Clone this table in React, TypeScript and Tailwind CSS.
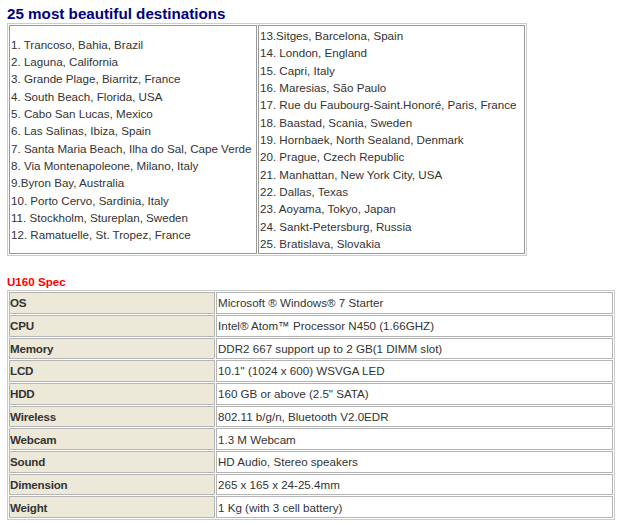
const left = [
  "1. Trancoso, Bahia, Brazil",
  "2. Laguna, California",
  "3. Grande Plage, Biarritz, France",
  "4. South Beach, Florida, USA",
  "5. Cabo San Lucas, Mexico",
  "6. Las Salinas, Ibiza, Spain",
  "7. Santa Maria Beach, Ilha do Sal, Cape Verde",
  "8. Via Montenapoleone, Milano, Italy",
  "9.Byron Bay, Australia",
  "10. Porto Cervo, Sardinia, Italy",
  "11. Stockholm, Stureplan, Sweden",
  "12. Ramatuelle, St. Tropez, France",
];

const right = [
  "13.Sitges, Barcelona, Spain",
  "14. London, England",
  "15. Capri, Italy",
  "16. Maresias, São Paulo",
  "17. Rue du Faubourg-Saint.Honoré, Paris, France",
  "18. Baastad, Scania, Sweden",
  "19. Hornbaek, North Sealand, Denmark",
  "20. Prague, Czech Republic",
  "21. Manhattan, New York City, USA",
  "22. Dallas, Texas",
  "23. Aoyama, Tokyo, Japan",
  "24. Sankt-Petersburg, Russia",
  "25. Bratislava, Slovakia",
];

const specs: [string, string][] = [
  ["OS", "Microsoft ® Windows® 7 Starter"],
  ["CPU", "Intel® Atom™ Processor N450 (1.66GHZ)"],
  ["Memory", "DDR2 667 support up to 2 GB(1 DIMM slot)"],
  ["LCD", "10.1\" (1024 x 600) WSVGA LED"],
  ["HDD", "160 GB or above (2.5\" SATA)"],
  ["Wireless", "802.11 b/g/n, Bluetooth V2.0EDR"],
  ["Webcam", "1.3 M Webcam"],
  ["Sound", "HD Audio, Stereo speakers"],
  ["Dimension", "265 x 165 x 24-25.4mm"],
  ["Weight", "1 Kg (with 3 cell battery)"],
];

export default function App() {
  return (
    <div className="w-[620px] h-[524px] bg-white px-[7px] pt-[4px] font-['Liberation_Sans',Arial,sans-serif] text-[#333]">
      <h1 className="text-[15.2px] leading-[19px] font-bold text-[#000080]">
        25 most beautiful destinations
      </h1>

      <table className="w-[520px] table-fixed border border-[#ccc] border-separate border-spacing-[1px] text-[11.6px] leading-[17.33px] whitespace-nowrap">
        <tbody>
          <tr>
            <td className="w-[248px] align-middle border border-[#999] px-px py-0">
              {left.map((d) => (
                <div key={d}>{d}</div>
              ))}
            </td>
            <td className="align-middle border border-[#999] px-px py-px">
              {right.map((d) => (
                <div key={d}>{d}</div>
              ))}
            </td>
          </tr>
        </tbody>
      </table>

      <h2 className="mt-[18px] text-[11.6px] leading-[16px] font-bold text-[#ff0000]">U160 Spec</h2>

      <table className="w-[608px] table-fixed border border-[#ccc] border-separate border-spacing-[1px] text-[11.6px] whitespace-nowrap">
        <tbody>
          {specs.map(([k, v]) => (
            <tr key={k}>
              <td className="w-[206px] h-[21.7px] bg-[#ece9d8] border border-[#b5b5b5] px-0 py-0 font-bold tracking-[-0.2px]">
                {k}
              </td>
              <td className="h-[21.7px] border border-[#b5b5b5] px-px py-0">{v}</td>
            </tr>
          ))}
        </tbody>
      </table>
    </div>
  );
}
